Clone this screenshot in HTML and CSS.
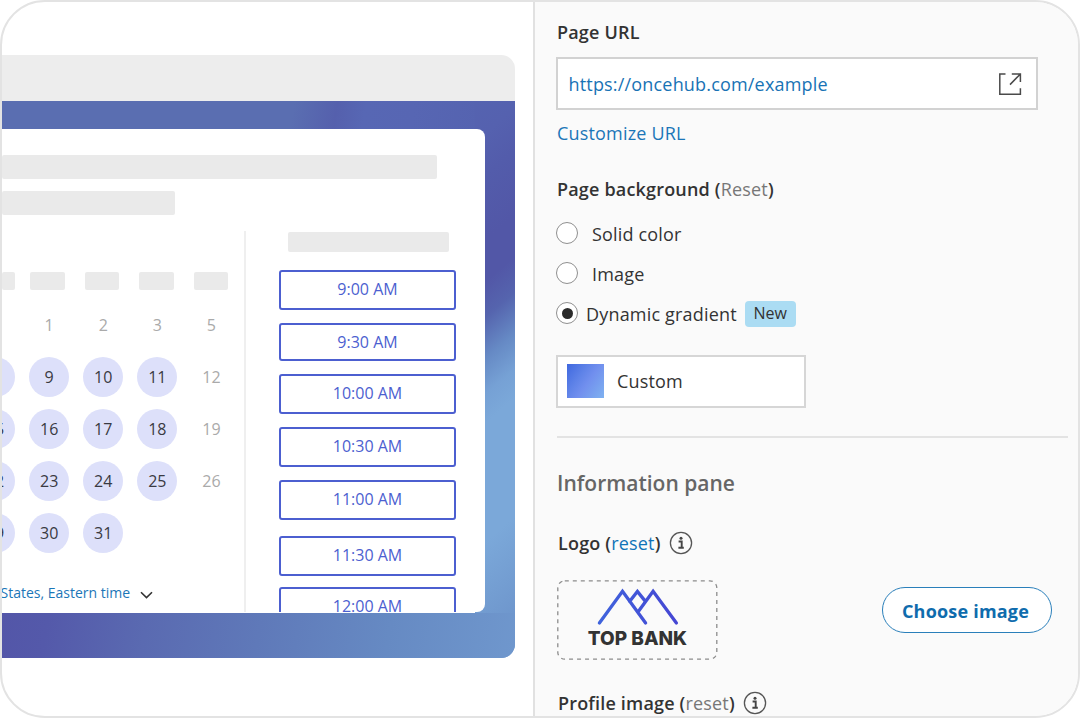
FILE: index.html
```html
<!DOCTYPE html>
<html lang="en">
<head>
<meta charset="utf-8">
<title>Booking page settings</title>
<link rel="stylesheet" href="styles.css">
</head>
<body>
<main class="frame">
  <section class="preview">
    <div class="browser">
      <div class="browser-bar"></div>
      <div class="backdrop">
        <div class="booking">
          <div class="ph ph-title"></div>
          <div class="ph ph-sub"></div>
          <div class="columns">
            <div class="calendar">
              <div class="weekdays">
                <div class="ph"></div><div class="ph"></div><div class="ph"></div><div class="ph"></div><div class="ph"></div>
              </div>
              <div class="days">
                <span></span><span>1</span><span>2</span><span>3</span><span>5</span>
                <span class="on">8</span><span class="on">9</span><span class="on">10</span><span class="on">11</span><span>12</span>
                <span class="on">15</span><span class="on">16</span><span class="on">17</span><span class="on">18</span><span>19</span>
                <span class="on">22</span><span class="on">23</span><span class="on">24</span><span class="on">25</span><span>26</span>
                <span class="on">29</span><span class="on">30</span><span class="on">31</span>
              </div>
              <div class="timezone">
                <span>States, Eastern time</span>
                <svg width="13" height="8" viewBox="0 0 13 8"><path d="M1 1.2 6.5 6.6 12 1.2" fill="none" stroke="#333" stroke-width="1.6"/></svg>
              </div>
            </div>
            <div class="slots">
              <div class="ph ph-date"></div>
              <div class="slot">9:00 AM</div>
              <div class="slot short">9:30 AM</div>
              <div class="slot">10:00 AM</div>
              <div class="slot">10:30 AM</div>
              <div class="slot">11:00 AM</div>
              <div class="slot late">11:30 AM</div>
              <div class="slot final">12:00 AM</div>
            </div>
          </div>
        </div>
      </div>
    </div>
  </section>

  <section class="settings">
    <h2 class="label url-label">Page URL</h2>
    <div class="url-box">
      <span class="url">https://oncehub.com/example</span>
      <svg width="24" height="24" viewBox="0 0 24 24" fill="none" stroke="#4a4a4a" stroke-width="1.5"><path d="M7.5 2H1.8V22.2H22.4V16.2M12 12.6 22 2.4M13.8 2H22.4V10"/></svg>
    </div>
    <div class="customize">Customize URL</div>
    <h2 class="label bg-label">Page background (<span class="muted">Reset</span>)</h2>
    <div class="option"><i class="radio"></i><span class="wide">Solid color</span></div>
    <div class="option"><i class="radio"></i><span class="wide">Image</span></div>
    <div class="option"><i class="radio checked"></i><span class="dyn">Dynamic gradient</span><b class="badge">New</b></div>
    <div class="gradient-box"><i class="swatch"></i><span>Custom</span></div>
    <hr class="rule">
    <h1 class="heading">Information pane</h1>
    <div class="row">
      <h2 class="label">Logo (<span class="link">reset</span>)</h2>
      <svg class="info" width="24" height="24" viewBox="0 0 24 24"><circle cx="12" cy="12" r="10.6" fill="none" stroke="#555" stroke-width="1.3"/><circle cx="12" cy="7.2" r="1.5" fill="#444"/><path d="M9.6 10.5h3.1v6M9.4 16.7h5.4" fill="none" stroke="#444" stroke-width="1.9"/></svg>
    </div>
    <div class="logo-row">
      <div class="logo-box">
        <svg class="outline" width="161" height="80" viewBox="0 0 161 80"><rect x=".8" y=".8" width="159" height="78.4" rx="7" fill="none" stroke="#8c8c8c" stroke-width="1.3" stroke-dasharray="4 4"/></svg>
        <svg class="peaks" width="82" height="38" viewBox="0 0 82 38">
          <defs><linearGradient id="peak" x1="0" x2="1" y1="0" y2="0"><stop offset="0" stop-color="#3f63dc"/><stop offset="1" stop-color="#4546d3"/></linearGradient></defs>
          <path d="M2.4 35 25.5 3.2 48.6 35M32.6 13.4 40.4 3.4 48.4 13.4M40.8 24.2 56.1 3.2 79.4 35" fill="none" stroke="url(#peak)" stroke-width="3.3" stroke-linecap="round"/>
        </svg>
        <span class="bank">TOP BANK</span>
      </div>
      <button class="choose">Choose image</button>
    </div>
    <div class="row last">
      <h2 class="label">Profile image (<span class="muted">reset</span>)</h2>
      <svg class="info" width="24" height="24" viewBox="0 0 24 24"><circle cx="12" cy="12" r="10.6" fill="none" stroke="#555" stroke-width="1.3"/><circle cx="12" cy="7.2" r="1.5" fill="#444"/><path d="M9.6 10.5h3.1v6M9.4 16.7h5.4" fill="none" stroke="#444" stroke-width="1.9"/></svg>
    </div>
  </section>
</main>
</body>
</html>
```
FILE: styles.css
```css
* { box-sizing: border-box; }
html, body { margin: 0; background: #fff; }
body { font-family: "Open Sans", sans-serif; color: #333; overflow: hidden; }
h1, h2 { margin: 0; }
svg { display: block; flex: none; }

.frame {
  display: flex;
  width: 1080px;
  height: 718px;
  border: 2px solid #e3e3e3;
  border-radius: 45px;
  overflow: hidden;
}

.preview { width: 531px; flex: none; padding-top: 53px; }
.browser { width: 513px; height: 602.5px; border-radius: 0 14px 14px 0; overflow: hidden; }
.browser-bar { height: 46px; background: #ededed; }
.backdrop {
  height: 556.5px;
  padding-top: 28px;
  background:
    linear-gradient(100deg, #5356a8 0%, #5459aa 9%, #5a6ab1 28%, #5f79b9 50%, #668ac3 75%, #6f97cd 100%) left bottom / 100% 45px no-repeat,
    linear-gradient(100deg, #5a6eb1 0%, #5a6eb1 61%, #5560ad 70%, #5767b4 76%, #5766b3 86%, #5563b0 100%) left top / 473px 40px no-repeat,
    linear-gradient(140deg, #5563b0 0%, #5561af 7%, #535cab 14%, #5257a7 25%, #5257a7 32%, #5564ae 38%, #668ac5 45%, #76a1d5 51%, #7ba8d9 56%, #7ba8d9 76%, #6f97cd 92%) right top / 40px 100% no-repeat;
}
.booking {
  width: 483.4px;
  height: 483.3px;
  background: #fff;
  border-radius: 0 8px 8px 0;
  overflow: hidden;
  padding-top: 26px;
  box-shadow: -10px 0 0 #fff;
}
.ph { background: #eaeaea; border-radius: 2px; flex: none; }
.ph-title { width: 434.5px; height: 23.5px; }
.ph-sub { width: 173px; height: 24px; margin-top: 12.5px; }
.columns { display: flex; margin-top: 16px; height: 400px; }

.calendar { width: 244px; flex: none; border-right: 2px solid #efefef; padding-top: 40.5px; overflow: hidden; }
.weekdays { display: flex; gap: 20px; }
.weekdays .ph { width: 34.5px; height: 18.5px; }
.weekdays .ph:first-child { width: 13px; margin-right: -5px; }
.days {
  display: grid;
  grid-template-columns: repeat(5, 54.1px);
  grid-auto-rows: 52px;
  place-items: center;
  width: 271px;
  margin: 8.5px 0 0 -34px;
  font-size: 16px;
  color: #aaa;
}
.days span { width: 40px; height: 40px; line-height: 40px; text-align: center; }
.days .on { border-radius: 50%; background: #dde0fa; color: #3a3a42; }
.timezone { display: flex; align-items: center; gap: 10px; margin: 23.5px 0 0 -1.5px; height: 20px; font-size: 14px; color: #1b76b8; white-space: nowrap; }
.timezone svg { margin-top: 5px; }

.slots { width: 177px; margin-left: 33px; padding-top: 1px; }
.ph-date { width: 161px; height: 20px; margin: 0 0 18px 8.5px; }
.slot {
  height: 40px;
  margin-bottom: 13px;
  border: 2px solid #4c5fd0;
  border-radius: 3px;
  color: #4c5fd0;
  font-size: 16px;
  line-height: 35px;
  text-align: center;
}
.short { height: 38px; }
.late { margin-top: 16px; }
.final { margin-top: -2px; line-height: 34px; }

.settings { flex: 1; border-left: 2px solid #e1e1e1; background: #fafafa; padding: 18px 0 0 22px; font-size: 18px; height: 714px; overflow: hidden; letter-spacing: .18px; }
.label { font-size: 18px; font-weight: 600; line-height: 24px; white-space: nowrap; }
.muted { color: #777; font-weight: 400; }
.link { color: #0f73b8; font-weight: 400; }
.url-box {
  width: 482px; height: 53px; margin: 13px 0 0 -1px;
  border: 2px solid #d2d2d2; background: #fff;
  display: flex; align-items: center; justify-content: space-between;
  padding: 0 14px 0 10.5px; color: #1873b5;
}
.customize { margin-top: 10px; line-height: 26px; color: #1b76b8; }
.bg-label { margin: 31px 0 20px; }
.option { display: flex; align-items: center; height: 40px; }
.bg-label + .option { margin-top: -8px; }
.radio { width: 22px; height: 22px; border: 1.5px solid #8f8f8f; border-radius: 50%; background: #fff; display: flex; align-items: center; justify-content: center; flex: none; margin-left: -1px; }
.checked::before { content: ""; width: 11px; height: 11px; border-radius: 50%; background: #2b2b2b; }
.wide { margin-left: 14px; padding-top: 1px; }
.dyn { margin-left: 8px; padding-top: 1px; }
.badge { margin-left: 8px; width: 51px; height: 26px; border-radius: 4px; background: #abdcf3; font-size: 16px; font-weight: 400; line-height: 25px; text-align: center; letter-spacing: 0; margin-top: 1px; }
.gradient-box { width: 250px; height: 53px; margin: 22px 0 0 -1px; border: 2px solid #d6d6d6; background: #fff; display: flex; align-items: center; gap: 13px; padding: 0 0 1px 9px; }
.swatch { width: 37px; height: 34px; background: linear-gradient(125deg, #3f68df 0%, #5f83e8 35%, #718fee 55%, #7fb2f0 100%); }
.rule { width: 511px; height: 2px; border: 0; background: #e3e3e3; margin: 28px 0 0; }
.heading { font-size: 21px; font-weight: 600; line-height: 30px; color: #666; margin-top: 30px; letter-spacing: 0; }
.row { display: flex; align-items: center; gap: 8px; height: 24px; margin: 33px 0 0 1px; }
.logo-row { display: flex; align-items: center; margin-top: 25px; height: 80px; }
.logo-box { position: relative; width: 161px; height: 80px; display: flex; flex-direction: column; align-items: center; padding-top: 8px; }
.outline { position: absolute; left: 0; top: 0; }
.bank { font-family: Inter, sans-serif; font-size: 19px; font-weight: 800; line-height: 22px; white-space: nowrap; letter-spacing: 0; padding-top: 2px; }
.choose { width: 170px; height: 46px; margin: -20px 0 0 164px; padding: 1px 3px 0 0; border: 1.5px solid #2a7fba; border-radius: 23px; background: #fff; color: #0f6cad; font: 700 18px "Open Sans", sans-serif; letter-spacing: .2px; }
.last { margin-top: 31px; }
```
